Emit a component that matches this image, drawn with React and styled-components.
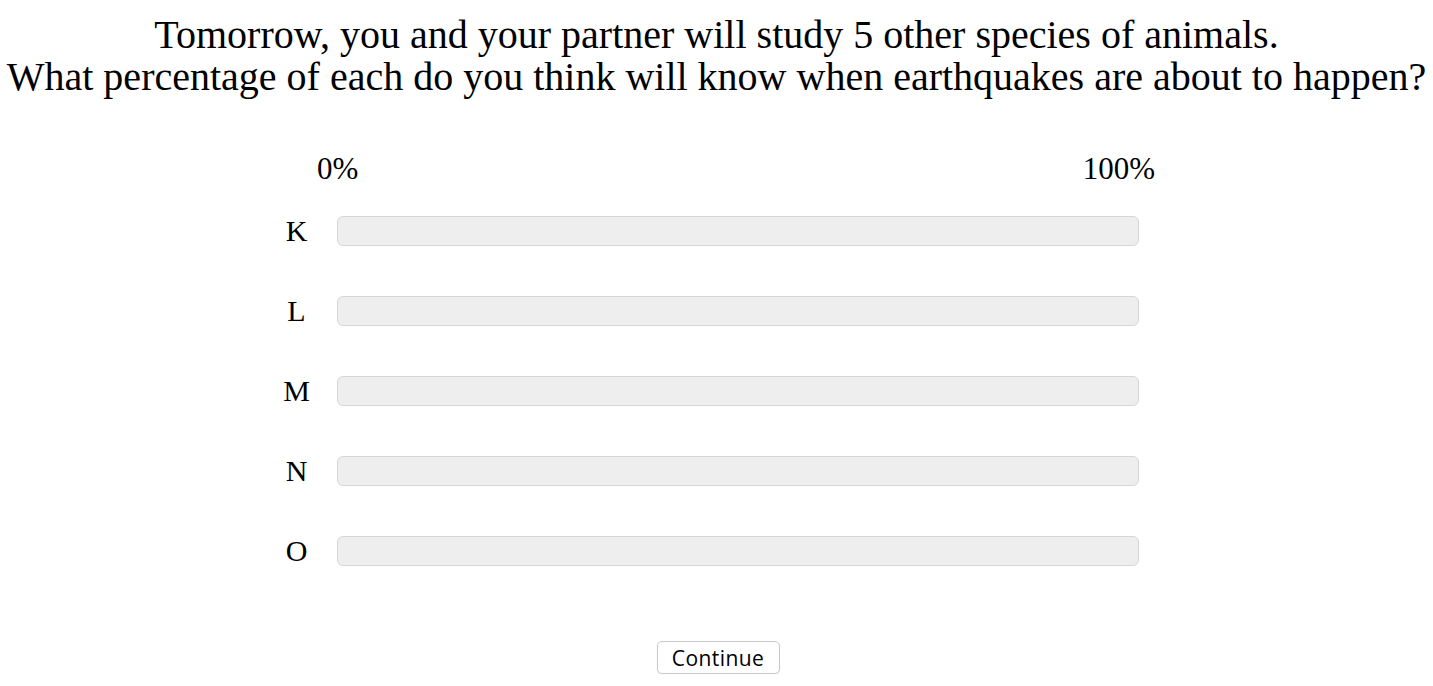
import React from "react";
import styled, { createGlobalStyle } from "styled-components";

const Global = createGlobalStyle`
  html, body { margin: 0; padding: 0; background: #fff; }
  body { font-family: "Liberation Serif", "Times New Roman", serif; color: #000; }
`;

const Page = styled.div`
  width: 1433px;
  display: flex;
  flex-direction: column;
  align-items: center;
`;

const Prompt = styled.div`
  margin-top: 14px;
  font-size: 40px;
  line-height: 42px;
  text-align: center;
  white-space: nowrap;
`;

const Scale = styled.div`
  margin-top: 53px;
  display: grid;
  grid-template-columns: 81px 802px;
  row-gap: 50px;
  align-items: center;
  margin-left: -38px;
`;

const EndLabels = styled.div`
  grid-column: 2;
  display: flex;
  justify-content: space-between;
  font-size: 31px;
  line-height: 36px;
  margin: 0 -16px -21px -20px;
`;

const RowLabel = styled.div`
  grid-column: 1;
  font-size: 30px;
  line-height: 30px;
  text-align: center;
`;

const Track = styled.div`
  grid-column: 2;
  height: 28px;
  border: 1px solid #d6d6d6;
  border-radius: 6px;
  background: #eeeeee;
`;

const ButtonRow = styled.div`
  margin-top: 75px;
  margin-left: 3px;
`;

const Button = styled.button`
  font-family: "Open Sans", "Liberation Sans", Arial, sans-serif;
  font-size: 21px;
  letter-spacing: 0.4px;
  line-height: 24px;
  height: 33px;
  width: 123px;
  padding: 0;
  background: #fff;
  border: 1px solid #c9c9c9;
  border-radius: 5px;
  color: #000;
  box-shadow: 0 1px 1px rgba(0,0,0,0.08);
`;

const rows = ["K", "L", "M", "N", "O"];

export default function App() {
  return (
    <Page>
      <Global />
      <Prompt>
        Tomorrow, you and your partner will study 5 other species of animals.
        <br />
        What percentage of each do you think will know when earthquakes are about to happen?
      </Prompt>
      <Scale>
        <EndLabels>
          <span>0%</span>
          <span>100%</span>
        </EndLabels>
        {rows.map((r) => (
          <React.Fragment key={r}>
            <RowLabel>{r}</RowLabel>
            <Track />
          </React.Fragment>
        ))}
      </Scale>
      <ButtonRow>
        <Button>Continue</Button>
      </ButtonRow>
    </Page>
  );
}
